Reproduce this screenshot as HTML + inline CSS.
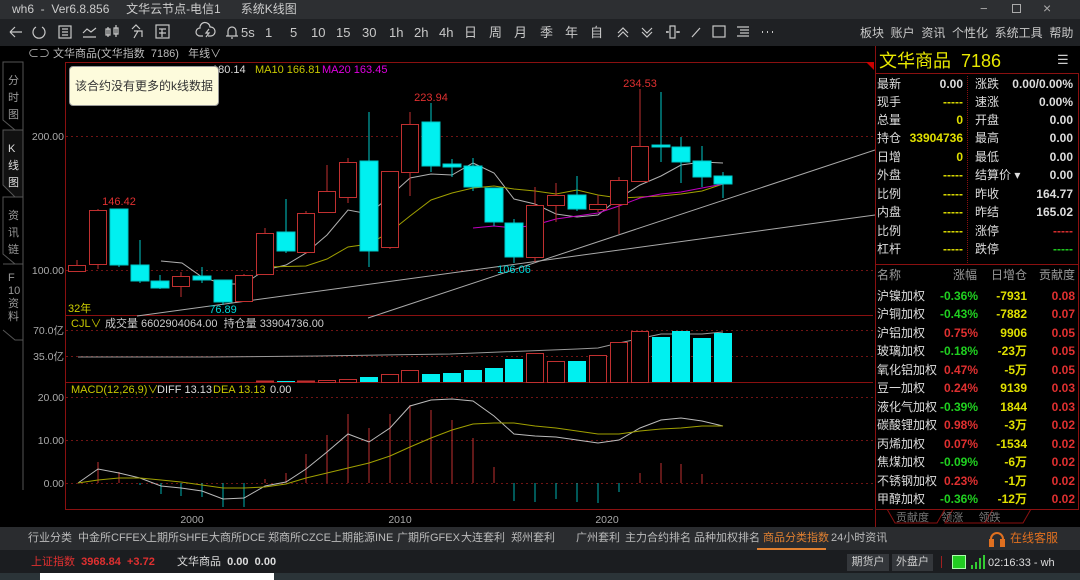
<!DOCTYPE html>
<html><head><meta charset="utf-8"><style>
*{margin:0;padding:0;box-sizing:border-box}
body{width:1080px;height:580px;overflow:hidden;background:#000;font-family:"Liberation Sans","Noto Sans CJK SC",sans-serif;position:relative;color:#ccc}
.a{position:absolute;white-space:nowrap}
#title{left:0;top:0;width:1080px;height:19px;background:#2d2f32}
#tb{left:0;top:19px;width:1080px;height:27px;background:#1f2124}
.t{position:absolute;font-size:13px;color:#c8c8c8;top:25px;line-height:15px}
#bt{left:0;top:527px;width:1080px;height:23px;background:#2a2c2f}
#st{left:0;top:550px;width:1080px;height:23px;background:#1b1d20}
#st2{left:0;top:573px;width:1080px;height:7px;background:#2b3438}
.bi{position:absolute;top:531px;font-size:11px;line-height:15px;color:#bbb}
.row{position:absolute;left:877px;width:200px;height:19px;font-size:12px}
.row span{position:absolute;top:0;line-height:19px;height:19px}
</style></head><body>
<div id="title" class="a"></div>
<div class="a" style="left:12px;top:2px;font-size:12px;line-height:15px;color:#ccc">wh6 &nbsp;- &nbsp;Ver6.8.856 &nbsp;&nbsp;&nbsp;&nbsp;文华云节点-电信1 &nbsp;&nbsp;&nbsp;&nbsp;&nbsp;系统K线图</div>
<div class="a" style="left:980px;top:1px;font-size:13px;color:#aaa">−</div>
<div class="a" style="left:1012px;top:4px;width:9px;height:9px;border:1px solid #aaa"></div>
<div class="a" style="left:1043px;top:0px;font-size:14px;color:#aaa">×</div>
<div id="tb" class="a"></div>
<svg class="a" style="left:0;top:19px" width="780" height="27" fill="none" stroke="#c8c8c8" stroke-width="1.2">
<path d="M10 13h12M10 13l5-5M10 13l5 5"/>
<path d="M36 8a6 6 0 1 0 6 0"/>
<rect x="59" y="7" width="12" height="12"/><path d="M62 10h6M62 13h6M62 16h6"/>
<path d="M83 18h13M83 14l4-4 4 3 5-4"/>
<path d="M108 8v10M106 10h4v6h-4zM116 6v12M114 9h4v6h-4z"/>
<path d="M132 10l4-4 4 4M134 12h8v6M138 12l-4 7"/>
<rect x="156" y="6" width="13" height="13"/><path d="M159 10h7M162 10v8M159 14h7"/>
<path d="M203 17h-3a4 4 0 0 1 0-8 5 5 0 0 1 10-1 4 4 0 0 1 1 9h-3M209 10l-3 4h3l-3 4"/>
<path d="M226 17h12M228 17v-5a4 4 0 0 1 8 0v5M231 19h2"/>
<path d="M618 14l5-5 5 5M618 18l5-5 5 5M642 9l5 5 5-5M642 13l5 5 5-5"/>
<path d="M666 13h3M667 12v2M676 13h4M678 12v2M670 7h5v12h-5z"/>
<path d="M692 18l8-9"/>
<rect x="713" y="7" width="12" height="11"/>
<path d="M737 8h12M740 11h9M740 14h9M737 17h12"/>
<path d="M762 13h1M767 13h1M772 13h1" stroke-width="2"/>
</svg>
<div class="t" style="left:241px">5s</div><div class="t" style="left:265px">1</div><div class="t" style="left:290px">5</div>
<div class="t" style="left:311px">10</div><div class="t" style="left:336px">15</div><div class="t" style="left:362px">30</div>
<div class="t" style="left:389px">1h</div><div class="t" style="left:414px">2h</div><div class="t" style="left:439px">4h</div>
<div class="t" style="left:464px">日</div><div class="t" style="left:489px">周</div><div class="t" style="left:514px">月</div>
<div class="t" style="left:540px">季</div><div class="t" style="left:565px">年</div><div class="t" style="left:590px">自</div>
<div class="t" style="left:860px;font-size:12px;top:26px">板块 &nbsp;账户 &nbsp;资讯 &nbsp;个性化 &nbsp;系统工具 &nbsp;帮助</div>

<div class="a" style="left:28px;top:47px;font-size:11px;line-height:14px;color:#bbb">⊂⊃ 文华商品(文华指数 &nbsp;7186) &nbsp;&nbsp;年线∨</div>

<svg class="a" style="left:0;top:60px" width="30" height="430" fill="none" stroke="#555">
<path d="M3 2h20v68l-8 0 -12-10z"/><path d="M3 70h20v67h-8l-12-12z" fill="#111"/><path d="M3 137h20v67l-8 0-12-10z"/><path d="M3 204h20v76l-8 0-12-10"/>
<path d="M23 280v180l-20 25"/>
</svg>
<div class="a" style="left:8px;top:73px;font-size:11px;color:#999;line-height:17px;white-space:normal;width:12px">分时图</div>
<div class="a" style="left:8px;top:141px;font-size:11px;color:#ddd;line-height:17px;white-space:normal;width:12px">K线图</div>
<div class="a" style="left:8px;top:208px;font-size:11px;color:#999;line-height:17px;white-space:normal;width:12px">资讯链</div>
<div class="a" style="left:8px;top:272px;font-size:11px;color:#999;line-height:13px;white-space:normal;width:12px">F<br>10<br>资<br>料</div>

<svg class="a" style="left:0;top:0" width="875" height="527" font-family="Liberation Sans,Noto Sans CJK SC,sans-serif">
<g stroke="#8a1010" fill="none">
<path d="M65 62.5H874M65.5 62V510M65 315.5H873M65 382.5H873M65 509.5H873"/>
</g>
<path d="M866 62h8v8z" fill="#c00"/>
<g stroke="#701414" stroke-dasharray="2 3">
<path d="M66 136.5H873M66 270.5H873M66 330.5H873M66 356.5H873M66 397.5H873M66 440.5H873M66 483.5H873"/>
</g>
<g font-size="10.5" fill="#aaa" text-anchor="end">
<text x="64" y="140">200.00</text><text x="64" y="274">100.00</text>
<text x="64" y="334">70.0亿</text><text x="64" y="360">35.0亿</text>
<text x="64" y="401">20.00</text><text x="64" y="444">10.00</text><text x="64" y="487">0.00</text>
</g>
<g stroke="#aaa" stroke-width="1" fill="none">
<path d="M137 316L875 215"/><path d="M368 318L875 150"/>
</g>
<polyline fill="none" stroke="#b0b0b0" points="161,261 182,263 202,277 223,284 244,284 265,270 286,265 306,253 327,235 348,210 369,214 390,196 410,178 431,174 452,175 473,163 494,173 514,199 535,204 556,214 577,217 598,215 619,198 640,185 661,176 681,165 702,162 723,163"/>
<polyline fill="none" stroke="#a0a000" points="265,267 306,266 327,259 348,247 369,244 390,232 410,216 431,200 452,193 473,188 494,186 514,189 535,191 556,194 577,190 598,195 619,198 640,197 661,196 681,194 702,191 723,184"/>
<polyline fill="none" stroke="#c000c0" points="473,228 494,226 514,228 535,225 556,219 577,216 598,213 619,206 640,198 661,194 681,192 702,188 723,184"/>
<g stroke="#c03030" fill="#000">
<path d="M77 260V271M98 209V269M181 272V297M244 274V301M265 228V274M306 211V254M327 165V212M348 158V203M390 171V249M410 112V196M535 187V262M556 183V222M598 195V212M619 177V234M640 89V181"/>
<rect x="68.5" y="265.5" width="17" height="6"/><rect x="89.5" y="210.5" width="17" height="54"/><rect x="172.5" y="276.5" width="17" height="10"/>
<rect x="235.5" y="275.5" width="17" height="26"/><rect x="256.5" y="233.5" width="17" height="41"/><rect x="297.5" y="213.5" width="17" height="39"/>
<rect x="318.5" y="191.5" width="17" height="21"/><rect x="339.5" y="162.5" width="17" height="35"/><rect x="381.5" y="171.5" width="17" height="76"/>
<rect x="401.5" y="124.5" width="17" height="48"/><rect x="526.5" y="205.5" width="17" height="52"/><rect x="547.5" y="195.5" width="17" height="10"/>
<rect x="589.5" y="204.5" width="17" height="5"/><rect x="610.5" y="180.5" width="17" height="24"/><rect x="631.5" y="146.5" width="17" height="35"/>
</g>
<g stroke="#00c8c8" fill="#00f0f0">
<path d="M119 209V267M140 240V283M160 275V289M202 267V283M223 280V305M286 199V253M369 112V267M431 103V172M452 159V177M473 158V191M494 188V226M514 219V263M577 176V211M661 92V162M681 137V183M702 146V187M723 172V198"/>
<rect x="110" y="209" width="18" height="56"/><rect x="131" y="265" width="18" height="16"/><rect x="151" y="281" width="18" height="7"/>
<rect x="193" y="276" width="18" height="4"/><rect x="214" y="280" width="18" height="22"/><rect x="277" y="232" width="18" height="19"/>
<rect x="360" y="161" width="18" height="90"/><rect x="422" y="122" width="18" height="44"/><rect x="443" y="164" width="18" height="3"/>
<rect x="464" y="166" width="18" height="21"/><rect x="485" y="188" width="18" height="34"/><rect x="505" y="223" width="18" height="34"/>
<rect x="568" y="195" width="18" height="14"/><rect x="652" y="145" width="18" height="2"/><rect x="672" y="147" width="18" height="15"/>
<rect x="693" y="161" width="18" height="16"/><rect x="714" y="176" width="18" height="8"/>
</g>
<g font-size="11" text-anchor="middle">
<text x="119" y="205" fill="#e03030">146.42</text><text x="223" y="313" fill="#00d8d8">76.89</text>
<text x="431" y="101" fill="#e03030">223.94</text><text x="640" y="87" fill="#e03030">234.53</text>
<text x="514" y="273" fill="#00d8d8">106.06</text>
</g>
<text x="68" y="312" font-size="11" fill="#d0d000">32年</text>
<g font-size="11"><text x="212" y="73" fill="#ddd">180.14</text><text x="255" y="73" fill="#c8c800">MA10 166.81</text><text x="322" y="73" fill="#e000e0">MA20 163.45</text></g>
<text x="71" y="327" font-size="11" fill="#c8c800">CJL∨</text>
<text x="105" y="327" font-size="11" fill="#ccc">成交量 6602904064.00 &#160;持仓量 33904736.00</text>
<polyline fill="none" stroke="#999" points="78,357 212,357 318,356 450,354 577,349 598,348 619,343 661,334 702,334 723,332"/>
<g stroke="#c03030" fill="#000">
<rect x="256.5" y="381" width="17" height="1"/><rect x="297.5" y="381" width="17" height="1"/><rect x="318.5" y="380.5" width="17" height="2"/>
<rect x="339.5" y="379.5" width="17" height="3"/><rect x="381.5" y="374.5" width="17" height="8"/><rect x="401.5" y="370.5" width="17" height="12"/>
<rect x="526.5" y="353.5" width="17" height="29"/><rect x="547.5" y="361.5" width="17" height="21"/><rect x="589.5" y="355.5" width="17" height="27"/>
<rect x="610.5" y="342.5" width="17" height="40"/><rect x="631.5" y="331.5" width="17" height="51"/>
</g>
<g fill="#00f0f0">
<rect x="277" y="381" width="18" height="1"/><rect x="360" y="377" width="18" height="5"/><rect x="422" y="374" width="18" height="8"/>
<rect x="443" y="373" width="18" height="9"/><rect x="464" y="370" width="18" height="12"/><rect x="485" y="368" width="18" height="14"/>
<rect x="505" y="359" width="18" height="23"/><rect x="568" y="361" width="18" height="21"/><rect x="652" y="337" width="18" height="45"/>
<rect x="672" y="331" width="18" height="51"/><rect x="693" y="338" width="18" height="44"/><rect x="714" y="333" width="18" height="49"/>
</g>
<text x="71" y="393" font-size="11" fill="#c8c800">MACD(12,26,9)∨</text>
<text x="157" y="393" font-size="11" fill="#ddd">DIFF 13.13</text><text x="213" y="393" font-size="11" fill="#c8c800">DEA 13.13</text><text x="270" y="393" font-size="11" fill="#ddd">0.00</text>
<g stroke="#c03030"><path d="M98 483V462M119 483V472M265 483V479M286 483V473M306 483V454M327 483V435M348 483V414M369 483V428M390 483V414M410 483V405M431 483V410M452 483V420M473 483V438M494 483V467M640 483V473M661 483V463M681 483V464M702 483V474"/></g>
<g stroke="#00b0b0"><path d="M140 483V485M161 483V494M181 483V496M202 483V497M223 483V507M244 483V507M514 483V501M535 483V502M556 483V499M577 483V502M598 483V503M619 483V492"/></g>
<polyline fill="none" stroke="#bbb" points="78,483 98,469 119,473 140,478 161,486 181,488 202,491 223,499 244,498 265,486 286,482 306,469 327,452 348,434 369,442 390,428 410,406 431,400 452,399 473,401 494,416 514,434 535,436 556,437 577,440 598,443 619,440 640,428 661,420 681,418 702,421 723,426"/>
<polyline fill="none" stroke="#a0a000" points="78,483 98,480 119,478 140,478 161,480 181,482 202,485 223,488 244,488 265,487 286,484 306,478 327,473 348,468 369,463 390,456 410,447 431,438 452,430 473,424 494,423 514,423 535,426 556,428 577,431 598,434 619,434 640,431 661,429 681,428 702,426 723,426"/>
<g font-size="10.5" fill="#aaa" text-anchor="middle"><text x="192" y="523">2000</text><text x="400" y="523">2010</text><text x="607" y="523">2020</text></g>
</svg>

<div class="a" style="left:69px;top:66px;width:150px;height:40px;background:#fdfbdc;border:1px solid #999;border-radius:4px;font-size:12px;color:#333;line-height:38px;text-align:center">该合约没有更多的k线数据</div>

<div class="a" style="left:875px;top:46px;width:205px;height:481px;background:#000;border-left:1px solid #8a1010"></div>
<div class="a" style="left:879px;top:50px;font-size:18px;line-height:22px;color:#e8e800">文华商品 &nbsp;7186</div>
<div class="a" style="left:1057px;top:52px;font-size:13px;color:#ccc">☰</div>
<div class="a" style="left:875px;top:73px;width:204px;height:192px;border:1px solid #8a1010"></div>
<div class="a" style="left:967px;top:76px;height:187px;border-left:1px dotted #8a1010"></div>
<div class="a" style="left:875px;top:265px;width:204px;height:245px;border:1px solid #8a1010;border-top:none"></div>
<div class="row" style="top:75px"><span style="left:0;color:#ddd">最新</span><span style="right:114px;color:#ddd;font-weight:bold">0.00</span><span style="left:98px;color:#ddd">涨跌</span><span style="right:4px;color:#ddd;font-weight:bold">0.00/0.00%</span></div>
<div class="row" style="top:93px"><span style="left:0;color:#ddd">现手</span><span style="right:114px;color:#e0e000;font-weight:bold">-----</span><span style="left:98px;color:#ddd">速涨</span><span style="right:4px;color:#ddd;font-weight:bold">0.00%</span></div>
<div class="row" style="top:111px"><span style="left:0;color:#ddd">总量</span><span style="right:114px;color:#e0e000;font-weight:bold">0</span><span style="left:98px;color:#ddd">开盘</span><span style="right:4px;color:#ddd;font-weight:bold">0.00</span></div>
<div class="row" style="top:129px"><span style="left:0;color:#ddd">持仓</span><span style="right:114px;color:#e0e000;font-weight:bold">33904736</span><span style="left:98px;color:#ddd">最高</span><span style="right:4px;color:#ddd;font-weight:bold">0.00</span></div>
<div class="row" style="top:148px"><span style="left:0;color:#ddd">日增</span><span style="right:114px;color:#e0e000;font-weight:bold">0</span><span style="left:98px;color:#ddd">最低</span><span style="right:4px;color:#ddd;font-weight:bold">0.00</span></div>
<div class="row" style="top:166px"><span style="left:0;color:#ddd">外盘</span><span style="right:114px;color:#e0e000;font-weight:bold">-----</span><span style="left:98px;color:#ddd">结算价 ▾</span><span style="right:4px;color:#ddd;font-weight:bold">0.00</span></div>
<div class="row" style="top:185px"><span style="left:0;color:#ddd">比例</span><span style="right:114px;color:#e0e000;font-weight:bold">-----</span><span style="left:98px;color:#ddd">昨收</span><span style="right:4px;color:#ddd;font-weight:bold">164.77</span></div>
<div class="row" style="top:203px"><span style="left:0;color:#ddd">内盘</span><span style="right:114px;color:#e0e000;font-weight:bold">-----</span><span style="left:98px;color:#ddd">昨结</span><span style="right:4px;color:#ddd;font-weight:bold">165.02</span></div>
<div class="row" style="top:222px"><span style="left:0;color:#ddd">比例</span><span style="right:114px;color:#e0e000;font-weight:bold">-----</span><span style="left:98px;color:#ddd">涨停</span><span style="right:4px;color:#e03030;font-weight:bold">-----</span></div>
<div class="row" style="top:240px"><span style="left:0;color:#ddd">杠杆</span><span style="right:114px;color:#e0e000;font-weight:bold">-----</span><span style="left:98px;color:#ddd">跌停</span><span style="right:4px;color:#20d020;font-weight:bold">-----</span></div>

<div class="row" style="top:266px;color:#999"><span style="left:0">名称</span><span style="right:100px">涨幅</span><span style="right:50px">日增仓</span><span style="right:2px">贡献度</span></div>
<div class="row" style="top:287px"><span style="left:0;color:#ddd">沪镍加权</span><span style="right:99px;color:#20d020;font-weight:bold">-0.36%</span><span style="right:50px;color:#e0e000;font-weight:bold">-7931</span><span style="right:2px;color:#e03030;font-weight:bold">0.08</span></div>
<div class="row" style="top:305px"><span style="left:0;color:#ddd">沪铜加权</span><span style="right:99px;color:#20d020;font-weight:bold">-0.43%</span><span style="right:50px;color:#e0e000;font-weight:bold">-7882</span><span style="right:2px;color:#e03030;font-weight:bold">0.07</span></div>
<div class="row" style="top:324px"><span style="left:0;color:#ddd">沪铝加权</span><span style="right:99px;color:#e03030;font-weight:bold">0.75%</span><span style="right:50px;color:#e0e000;font-weight:bold">9906</span><span style="right:2px;color:#e03030;font-weight:bold">0.05</span></div>
<div class="row" style="top:342px"><span style="left:0;color:#ddd">玻璃加权</span><span style="right:99px;color:#20d020;font-weight:bold">-0.18%</span><span style="right:50px;color:#e0e000;font-weight:bold">-23万</span><span style="right:2px;color:#e03030;font-weight:bold">0.05</span></div>
<div class="row" style="top:361px"><span style="left:0;color:#ddd">氧化铝加权</span><span style="right:99px;color:#e03030;font-weight:bold">0.47%</span><span style="right:50px;color:#e0e000;font-weight:bold">-5万</span><span style="right:2px;color:#e03030;font-weight:bold">0.05</span></div>
<div class="row" style="top:379px"><span style="left:0;color:#ddd">豆一加权</span><span style="right:99px;color:#e03030;font-weight:bold">0.24%</span><span style="right:50px;color:#e0e000;font-weight:bold">9139</span><span style="right:2px;color:#e03030;font-weight:bold">0.03</span></div>
<div class="row" style="top:398px"><span style="left:0;color:#ddd">液化气加权</span><span style="right:99px;color:#20d020;font-weight:bold">-0.39%</span><span style="right:50px;color:#e0e000;font-weight:bold">1844</span><span style="right:2px;color:#e03030;font-weight:bold">0.03</span></div>
<div class="row" style="top:416px"><span style="left:0;color:#ddd">碳酸锂加权</span><span style="right:99px;color:#e03030;font-weight:bold">0.98%</span><span style="right:50px;color:#e0e000;font-weight:bold">-3万</span><span style="right:2px;color:#e03030;font-weight:bold">0.02</span></div>
<div class="row" style="top:435px"><span style="left:0;color:#ddd">丙烯加权</span><span style="right:99px;color:#e03030;font-weight:bold">0.07%</span><span style="right:50px;color:#e0e000;font-weight:bold">-1534</span><span style="right:2px;color:#e03030;font-weight:bold">0.02</span></div>
<div class="row" style="top:453px"><span style="left:0;color:#ddd">焦煤加权</span><span style="right:99px;color:#20d020;font-weight:bold">-0.09%</span><span style="right:50px;color:#e0e000;font-weight:bold">-6万</span><span style="right:2px;color:#e03030;font-weight:bold">0.02</span></div>
<div class="row" style="top:472px"><span style="left:0;color:#ddd">不锈钢加权</span><span style="right:99px;color:#e03030;font-weight:bold">0.23%</span><span style="right:50px;color:#e0e000;font-weight:bold">-1万</span><span style="right:2px;color:#e03030;font-weight:bold">0.02</span></div>
<div class="row" style="top:490px"><span style="left:0;color:#ddd">甲醇加权</span><span style="right:99px;color:#20d020;font-weight:bold">-0.36%</span><span style="right:50px;color:#e0e000;font-weight:bold">-12万</span><span style="right:2px;color:#e03030;font-weight:bold">0.02</span></div>
<svg class="a" style="left:875px;top:509px" width="205" height="18" fill="none" stroke="#8a1010"><path d="M12 0l8 14h42l8-14M70 14l8-14M78 0l-8 14h40l8-14M110 14l8-14M118 0l-8 14h38l8-14"/></svg>
<div class="a" style="left:896px;top:511px;font-size:11px;line-height:14px;color:#777">贡献度 &nbsp;&nbsp;&nbsp;领涨 &nbsp;&nbsp;&nbsp;&nbsp;领跌</div>

<div id="bt" class="a"></div>
<div class="bi" style="left:28px">行业分类</div><div class="bi" style="left:78px">中金所CFFEX</div><div class="bi" style="left:146px">上期所SHFE</div>
<div class="bi" style="left:209px">大商所DCE</div><div class="bi" style="left:268px">郑商所CZCE</div><div class="bi" style="left:331px">上期能源INE</div>
<div class="bi" style="left:397px">广期所GFEX</div><div class="bi" style="left:461px">大连套利</div><div class="bi" style="left:511px">郑州套利</div>
<div class="bi" style="left:576px">广州套利</div><div class="bi" style="left:625px">主力合约排名</div><div class="bi" style="left:694px">品种加权排名</div>
<div class="bi" style="left:763px;color:#e08030">商品分类指数</div><div class="bi" style="left:831px">24小时资讯</div>
<div class="a" style="left:757px;top:548px;width:69px;height:2px;background:#e08030"></div>
<svg class="a" style="left:988px;top:530px" width="20" height="18" fill="none" stroke="#e07020" stroke-width="2"><path d="M3 12V9a6 6 0 0 1 12 0v3"/><rect x="2" y="10" width="3" height="6" fill="#e07020"/><rect x="13" y="10" width="3" height="6" fill="#e07020"/></svg>
<div class="a" style="left:1010px;top:531px;font-size:12px;line-height:15px;color:#e07020">在线客服</div>

<div id="st" class="a"></div>
<div class="a" style="left:31px;top:555px;font-size:11px;line-height:14px;color:#e03030">上证指数 &nbsp;<b>3968.84 &nbsp;+3.72</b></div>
<div class="a" style="left:177px;top:555px;font-size:11px;line-height:14px;color:#ddd">文华商品 &nbsp;<b>0.00 &nbsp;0.00</b></div>
<div class="a" style="left:847px;top:554px;width:42px;height:17px;background:#34373b;font-size:11px;color:#ccc;text-align:center;line-height:17px">期货户</div>
<div class="a" style="left:892px;top:554px;width:41px;height:17px;background:#34373b;font-size:11px;color:#ccc;text-align:center;line-height:17px">外盘户</div>
<div class="a" style="left:941px;top:556px;width:1px;height:12px;background:#a02020"></div>
<div class="a" style="left:952px;top:555px;width:14px;height:14px;background:#2c2;border:1px solid #afa"></div>
<svg class="a" style="left:971px;top:554px" width="14" height="16" fill="#3c3"><rect x="0" y="11" width="2" height="4"/><rect x="4" y="8" width="2" height="7"/><rect x="8" y="4" width="2" height="11"/><rect x="12" y="1" width="2" height="14"/></svg>
<div class="a" style="left:988px;top:556px;font-size:11px;line-height:14px;color:#ddd">02:16:33 - wh</div>
<div id="st2" class="a"></div>
<div class="a" style="left:40px;top:573px;width:234px;height:7px;background:#fff"></div>
</body></html>
